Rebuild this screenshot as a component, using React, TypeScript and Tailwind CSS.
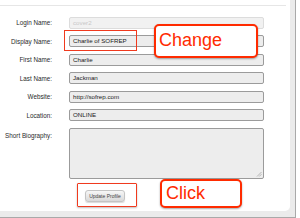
import React from 'react';

type Field = { label: string; value: string; disabled?: boolean };

const fields: Field[] = [
  { label: 'Login Name:', value: 'cover2', disabled: true },
  { label: 'Display Name:', value: 'Charlie of SOFREP' },
  { label: 'First Name:', value: 'Charlie' },
  { label: 'Last Name:', value: 'Jackman' },
  { label: 'Website:', value: 'http://sofrep.com' },
  { label: 'Location:', value: 'ONLINE' },
];

export default function App() {
  return (
    <div className="relative w-[300px] h-[218px] bg-white overflow-hidden font-['Liberation_Sans',Arial,sans-serif]">
      {/* window frame */}
      <div className="w-[296px] h-[218px] bg-[#ebebeb] border-r border-b border-[#a9a9a9]">
        <div className="w-[290px] h-[211px] bg-white rounded-br-[5px] pt-[5px]">
          <div className="h-px w-[286px] bg-[#e6e6e6]" />

          {/* form rows */}
          <div className="pt-[10.5px] flex flex-col gap-[6.6px]">
            {fields.map((f) => (
              <div key={f.label} className="flex items-center h-[12px]">
                <span className="w-[52px] text-right text-[6.3px] leading-[12px] text-[#2a2a2a] pt-[1px]">
                  {f.label}
                </span>
                <div
                  className={
                    f.disabled
                      ? 'ml-[17px] w-[195px] h-[12px] rounded-[2px] border border-[#dcdcdc] bg-[#f1f1f1] px-[3px] text-[6.2px] leading-[10px] text-[#c8c8c8]'
                      : 'ml-[17px] w-[195px] h-[12px] rounded-[2px] border border-[#9b9b9b] bg-[#ededed] px-[3px] text-[6.2px] leading-[10px] text-[#1a1a1a]'
                  }
                >
                  {f.value}
                </div>
              </div>
            ))}

            <div className="flex items-start">
              <span className="w-[52px] text-right text-[6.3px] leading-[12px] text-[#2a2a2a] mt-[2px]">
                Short Biography:
              </span>
              <div className="relative ml-[17px] w-[195px] h-[51px] rounded-[2px] border border-[#9b9b9b] bg-[#ededed]">
                <svg className="absolute right-[1px] bottom-[1px]" width="6" height="6" viewBox="0 0 6 6">
                  <path d="M1 5.5 L5.5 1 M3.2 5.5 L5.5 3.2" stroke="#a8a8a8" strokeWidth="0.8" />
                </svg>
              </div>
            </div>
          </div>

          <div className="flex mt-[11px] pl-[85px]">
            <button className="flex items-center justify-center p-0 w-[40px] h-[12px] rounded-[3px] border border-[#c4c4c4] bg-gradient-to-b from-[#f7f7f7] to-[#d9d9d9] shadow-[0_1px_1px_rgba(0,0,0,0.15)] whitespace-nowrap text-[5px] leading-[10px] text-[#444]">
              Update Profile
            </button>
          </div>
        </div>
      </div>

      {/* annotations */}
      <div className="absolute left-[64px] top-[30px] w-[73px] h-[21px] border-[1.5px] border-[#f03a1e]" />
      <div className="absolute left-[154px] top-[24px] w-[104px] h-[34px] rounded-[5px] border-2 border-[#ff2b00] bg-white shadow-[0_1px_2px_rgba(0,0,0,0.35)] pl-[3px] text-[18px] leading-[28px] text-[#ff2b00]">
        Change
      </div>
      <div className="absolute left-[77px] top-[183px] w-[60px] h-[24px] rounded-[1px] border-[1.5px] border-[#f03a1e] shadow-[0_1px_2px_rgba(0,0,0,0.25)]" />
      <div className="absolute left-[160px] top-[179px] w-[82px] h-[29px] rounded-[5px] border-2 border-[#ff2b00] bg-white shadow-[0_1px_2px_rgba(0,0,0,0.35)] pl-[4px] text-[18px] leading-[25px] text-[#ff2b00]">
        Click
      </div>
    </div>
  );
}
